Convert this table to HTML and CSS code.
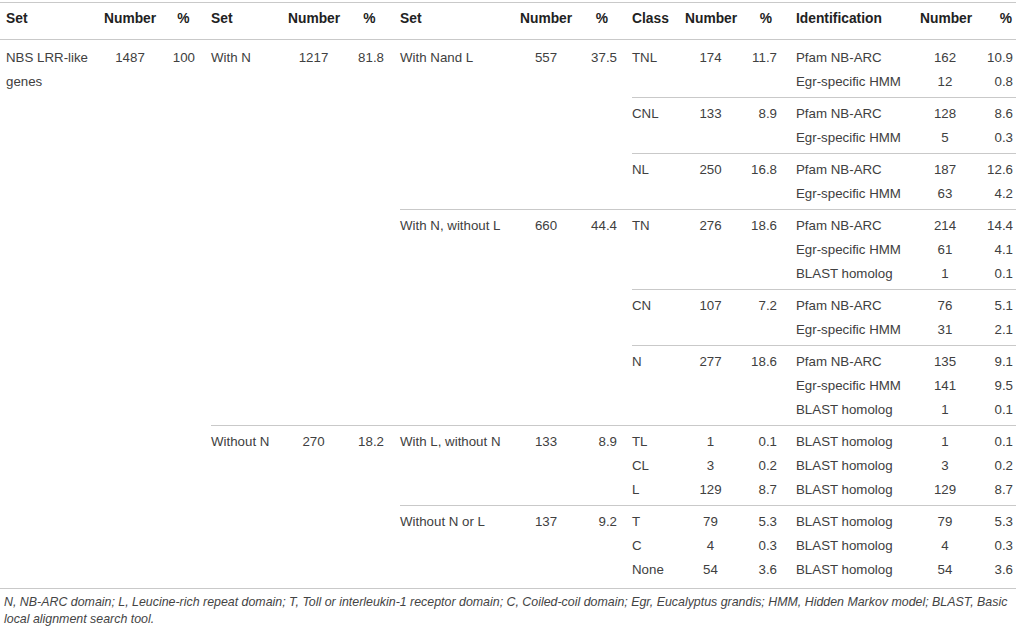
FILE: index.html
```html
<!DOCTYPE html>
<html lang="en">
<head>
<meta charset="utf-8">
<title>NBS LRR-like genes</title>
<link rel="stylesheet" href="styles.css">
</head>
<body>
<table class="genes">
  <colgroup>
    <col class="w-set1"><col class="w-num1"><col class="w-pct1">
    <col class="w-set2"><col class="w-num2"><col class="w-pct2">
    <col class="w-set3"><col class="w-num3"><col class="w-pct3">
    <col class="w-cls"><col class="w-num4"><col class="w-pct4">
    <col class="w-id"><col class="w-num5"><col class="w-pct5">
  </colgroup>
  <thead>
    <tr>
      <th class="txt first">Set</th><th class="num">Number</th><th class="hp">%</th>
      <th class="txt">Set</th><th class="num">Number</th><th class="hp">%</th>
      <th class="txt">Set</th><th class="num">Number</th><th class="hp">%</th>
      <th class="txt">Class</th><th class="num">Number</th><th class="hp">%</th>
      <th class="txt">Identification</th><th class="num">Number</th><th class="hp last">%</th>
    </tr>
  </thead>
  <tbody>
    <tr class="top">
      <td rowspan="20" class="txt first">NBS LRR-like genes</td><td rowspan="20" class="num">1487</td><td rowspan="20" class="pct p1">100</td>
      <td rowspan="14" class="txt">With N</td><td rowspan="14" class="num">1217</td><td rowspan="14" class="pct p2">81.8</td>
      <td rowspan="6" class="txt">With Nand L</td><td rowspan="6" class="num">557</td><td rowspan="6" class="pct p3">37.5</td>
      <td rowspan="2" class="txt">TNL</td><td rowspan="2" class="num">174</td><td rowspan="2" class="pct p4">11.7</td>
      <td class="txt">Pfam NB-ARC</td><td class="num">162</td><td class="pct p5">10.9</td>
    </tr>
    <tr class="ge"><td class="txt">Egr-specific HMM</td><td class="num">12</td><td class="pct p5">0.8</td></tr>

    <tr class="gs">
      <td rowspan="2" class="txt">CNL</td><td rowspan="2" class="num">133</td><td rowspan="2" class="pct p4">8.9</td>
      <td class="txt">Pfam NB-ARC</td><td class="num">128</td><td class="pct p5">8.6</td>
    </tr>
    <tr class="ge"><td class="txt">Egr-specific HMM</td><td class="num">5</td><td class="pct p5">0.3</td></tr>

    <tr class="gs">
      <td rowspan="2" class="txt">NL</td><td rowspan="2" class="num">250</td><td rowspan="2" class="pct p4">16.8</td>
      <td class="txt">Pfam NB-ARC</td><td class="num">187</td><td class="pct p5">12.6</td>
    </tr>
    <tr class="ge"><td class="txt">Egr-specific HMM</td><td class="num">63</td><td class="pct p5">4.2</td></tr>

    <tr class="gs">
      <td rowspan="8" class="txt">With N, without L</td><td rowspan="8" class="num">660</td><td rowspan="8" class="pct p3">44.4</td>
      <td rowspan="3" class="txt">TN</td><td rowspan="3" class="num">276</td><td rowspan="3" class="pct p4">18.6</td>
      <td class="txt">Pfam NB-ARC</td><td class="num">214</td><td class="pct p5">14.4</td>
    </tr>
    <tr><td class="txt">Egr-specific HMM</td><td class="num">61</td><td class="pct p5">4.1</td></tr>
    <tr class="ge"><td class="txt">BLAST homolog</td><td class="num">1</td><td class="pct p5">0.1</td></tr>

    <tr class="gs">
      <td rowspan="2" class="txt">CN</td><td rowspan="2" class="num">107</td><td rowspan="2" class="pct p4">7.2</td>
      <td class="txt">Pfam NB-ARC</td><td class="num">76</td><td class="pct p5">5.1</td>
    </tr>
    <tr class="ge"><td class="txt">Egr-specific HMM</td><td class="num">31</td><td class="pct p5">2.1</td></tr>

    <tr class="gs">
      <td rowspan="3" class="txt">N</td><td rowspan="3" class="num">277</td><td rowspan="3" class="pct p4">18.6</td>
      <td class="txt">Pfam NB-ARC</td><td class="num">135</td><td class="pct p5">9.1</td>
    </tr>
    <tr><td class="txt">Egr-specific HMM</td><td class="num">141</td><td class="pct p5">9.5</td></tr>
    <tr class="ge"><td class="txt">BLAST homolog</td><td class="num">1</td><td class="pct p5">0.1</td></tr>

    <tr class="gs">
      <td rowspan="6" class="txt">Without N</td><td rowspan="6" class="num">270</td><td rowspan="6" class="pct p2">18.2</td>
      <td rowspan="3" class="txt">With L, without N</td><td rowspan="3" class="num">133</td><td rowspan="3" class="pct p3">8.9</td>
      <td class="txt">TL</td><td class="num">1</td><td class="pct p4">0.1</td>
      <td class="txt">BLAST homolog</td><td class="num">1</td><td class="pct p5">0.1</td>
    </tr>
    <tr>
      <td class="txt">CL</td><td class="num">3</td><td class="pct p4">0.2</td>
      <td class="txt">BLAST homolog</td><td class="num">3</td><td class="pct p5">0.2</td>
    </tr>
    <tr class="ge">
      <td class="txt">L</td><td class="num">129</td><td class="pct p4">8.7</td>
      <td class="txt">BLAST homolog</td><td class="num">129</td><td class="pct p5">8.7</td>
    </tr>

    <tr class="gs">
      <td rowspan="3" class="txt">Without N or L</td><td rowspan="3" class="num">137</td><td rowspan="3" class="pct p3">9.2</td>
      <td class="txt">T</td><td class="num">79</td><td class="pct p4">5.3</td>
      <td class="txt">BLAST homolog</td><td class="num">79</td><td class="pct p5">5.3</td>
    </tr>
    <tr>
      <td class="txt">C</td><td class="num">4</td><td class="pct p4">0.3</td>
      <td class="txt">BLAST homolog</td><td class="num">4</td><td class="pct p5">0.3</td>
    </tr>
    <tr class="end">
      <td class="txt">None</td><td class="num">54</td><td class="pct p4">3.6</td>
      <td class="txt">BLAST homolog</td><td class="num">54</td><td class="pct p5">3.6</td>
    </tr>
  </tbody>
</table>
<p class="note">N, NB-ARC domain; L, Leucine-rich repeat domain; T, Toll or interleukin-1 receptor domain; C, Coiled-coil domain; Egr, Eucalyptus grandis; HMM, Hidden Markov model; BLAST, Basic local alignment search tool.</p>
</body>
</html>
```
FILE: styles.css
```css
html, body {
  margin: 0;
  padding: 0;
  background: #ffffff;
}

body {
  font-family: "Liberation Sans", Arial, sans-serif;
  color: #404040;
  width: 1016px;
}

.genes {
  margin-top: 2px;
  width: 1016px;
  table-layout: fixed;
  border-collapse: separate;
  border-spacing: 0;
  border-top: 1px solid #c9c9c9;
  border-bottom: 1px solid #c9c9c9;
  font-size: 13.3px;
  line-height: 24px;
}

.w-set1 { width: 104px; }
.w-num1 { width: 52px; }
.w-pct1 { width: 55px; }
.w-set2 { width: 77px; }
.w-num2 { width: 51px; }
.w-pct2 { width: 61px; }
.w-set3 { width: 120px; }
.w-num3 { width: 52px; }
.w-pct3 { width: 60px; }
.w-cls  { width: 53px; }
.w-num4 { width: 51px; }
.w-pct4 { width: 60px; }
.w-id   { width: 124px; }
.w-num5 { width: 50px; }
.w-pct5 { width: 46px; }

th {
  font-weight: bold;
  font-size: 13.8px;
  color: #222222;
  padding: 4px 0 8px 0;
  border-bottom: 1px solid #c9c9c9;
  white-space: nowrap;
}

td {
  padding: 0;
  vertical-align: top;
  white-space: nowrap;
}

.txt { text-align: left; }
.num { text-align: center; }
.hp  { text-align: center; }
th.last { text-align: right; padding-right: 4px; }

.first {
  padding-left: 6px;
  white-space: normal;
}
td.first { white-space: normal; }

.pct { text-align: right; }
.p1 { padding-right: 16px; }
.p2 { padding-right: 16px; }
.p3 { padding-right: 15px; }
.p4 { padding-right: 19px; }
.p5 { padding-right: 3px; }

tr.top > td { padding-top: 6px; }
tr.gs > td {
  border-top: 1px solid #c9c9c9;
  padding-top: 4px;
}
tr.ge > td { padding-bottom: 3px; }
tr.end > td { padding-bottom: 6px; }

.note {
  margin: 5px 0 0 0;
  padding: 0 0 0 4px;
  font-style: italic;
  font-size: 12.4px;
  line-height: 17px;
  color: #444444;
}
```
